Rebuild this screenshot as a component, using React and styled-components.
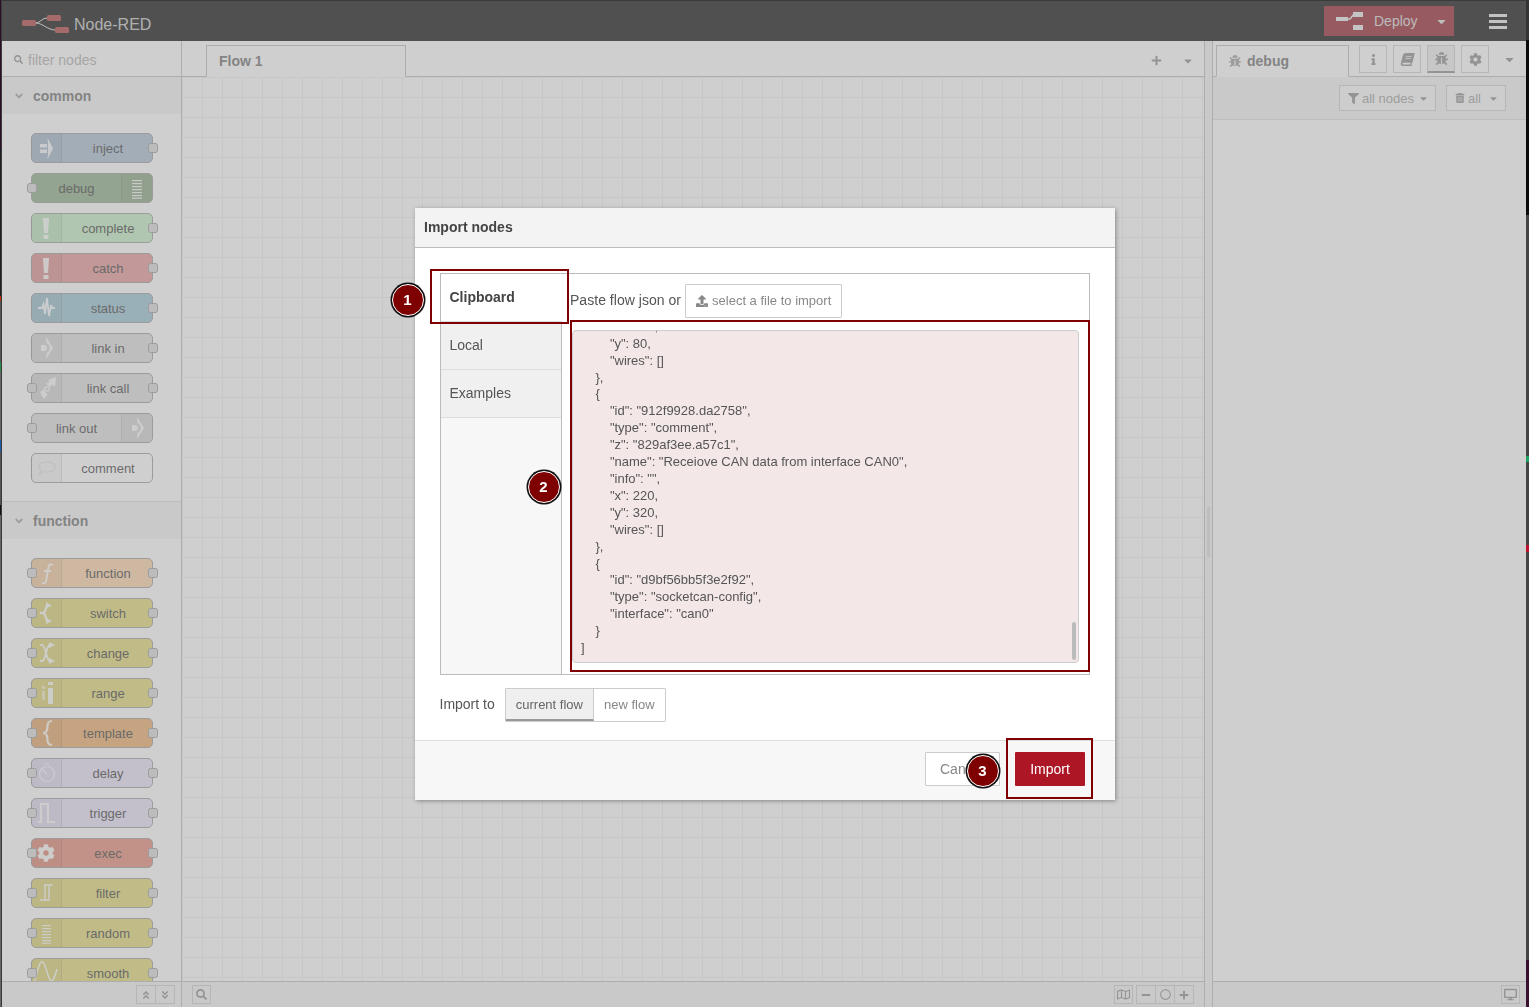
import React from 'react';
import styled, { createGlobalStyle } from 'styled-components';
import { FaBug, FaBook, FaInfo, FaCog, FaFilter, FaTrashAlt, FaSearch, FaPlus, FaMinus, FaRegCircle, FaRegMap, FaDesktop, FaAngleDoubleUp, FaAngleDoubleDown, FaCaretDown, FaUpload, FaAngleDown } from 'react-icons/fa';

const Global = createGlobalStyle`
  html, body { margin: 0; padding: 0; height: 100%; overflow: hidden; }
  body {
    font-family: "Liberation Sans", Arial, sans-serif;
    background-color: #3a3a3a;
    background-image:
      linear-gradient(to bottom, #2a1028 0, #2a1028 150px, #1c2222 150px, #1c2222 296px, #c02a10 296px, #c02a10 301px, #555 301px, #555 362px, #2a8a50 362px, #2a8a50 372px, #666 372px, #666 440px, #1c5ca8 440px, #1c5ca8 452px, #555 452px, #555 505px, #111 505px, #111 515px, #666 515px, #666 1007px),
      linear-gradient(to bottom, #333 0, #333 40px, #0a0a0a 40px, #0a0a0a 215px, #444 215px, #444 456px, #20a060 456px, #20a060 462px, #444 462px, #444 545px, #c01030 545px, #c01030 552px, #444 552px, #444 960px, #3a1030 960px, #3a1030 1007px);
    background-size: 1px 100%, 3px 100%;
    background-position: left top, right top;
    background-repeat: no-repeat;
  }
`;

const Frame = styled.div`
  position: relative;
  margin: 1px 3px 0 2px;
  height: 1006px;
  display: flex;
  flex-direction: column;
  overflow: hidden;
  background: #fff;
  color: #555;
  font-size: 14px;
`;
const Shade = styled.div`
  position: absolute;
  inset: 0;
  background: rgba(160, 160, 160, 0.5);
`;

const Header = styled.header`
  height: 40px;
  flex: none;
  background: #000;
  display: flex;
  align-items: center;
  padding: 0 19px 0 20px;
`;
const Brand = styled.div`
  display: flex;
  align-items: center;
  gap: 4px;
  color: #c0c0c0;
  font-size: 16px;
  flex: 1;
  padding-top: 6px;
  svg { margin-top: 2px; }
  span { margin-top: 1px; }
`;
const Deploy = styled.div`
  width: 130px;
  height: 30px;
  background: #8e1420;
  color: #d8d8d8;
  font-size: 14px;
  display: flex;
  align-items: center;
  padding-left: 12px;
  box-sizing: border-box;
  margin-right: 35px;
  svg:first-child { margin-right: 10px; }
  span { flex: 1; margin-top: -1px; }
  svg:last-child { margin-right: 6px; }
`;
const Burger = styled.div`
  width: 18px;
  display: flex;
  flex-direction: column;
  gap: 3px;
  i { display: block; height: 3px; background: #e4e4e4; }
`;

const Main = styled.div`
  flex: 1;
  display: flex;
  min-height: 0;
`;

const Palette = styled.aside`
  width: 179px;
  flex: none;
  display: flex;
  flex-direction: column;
  border-right: 1px solid #bbb;
  box-sizing: content-box;
  background: #fff;
`;
const Search = styled.div`
  height: 36px;
  flex: none;
  display: flex;
  align-items: center;
  gap: 5px;
  padding: 2px 0 0 12px;
  box-sizing: border-box;
  border-bottom: 1px solid #bbb;
  color: #aaa;
  svg { color: #888; }
`;
const PaletteScroll = styled.div`
  flex: 1;
  overflow: hidden;
  min-height: 0;
`;
const CatHeader = styled.div`
  height: ${p => (p.$first ? 37 : 38)}px;
  box-sizing: border-box;
  display: flex;
  align-items: center;
  gap: 8px;
  padding-left: 11px;
  background: #f3f3f3;
  ${p => !p.$first && 'border-top: 1px solid #ddd;'}
  color: #666;
  font-weight: bold;
  svg { color: #999; }
`;
const NodeList = styled.div`
  display: flex;
  flex-direction: column;
  gap: 10px;
  padding: 19px 0 18px 29px;
`;
const Node = styled.div`
  position: relative;
  width: 122px;
  height: 30px;
  box-sizing: border-box;
  flex: none;
  display: flex;
  flex-direction: ${p => (p.$right ? 'row-reverse' : 'row')};
  align-items: stretch;
  background: ${p => p.$color};
  border: 1px solid #999;
  border-radius: 5px;
  font-size: 13px;
  color: #333;
`;
const NodeIcon = styled.div`
  width: 30px;
  flex: none;
  margin: ${p => (p.$right ? '0' : '0 0 0 -1px')};
  background: rgba(0, 0, 0, 0.05);
  ${p => (p.$right ? 'border-left' : 'border-right')}: 1px solid rgba(0, 0, 0, 0.1);
  border-radius: ${p => (p.$right ? '0 4px 4px 0' : '4px 0 0 4px')};
  display: flex;
  align-items: center;
  justify-content: center;
  svg { display: block; }
`;
const NodeLabel = styled.div`
  flex: 1;
  text-align: center;
  line-height: 30px;
  padding-left: ${p => (p.$right ? 0 : 2)}px;
`;
const Port = styled.span`
  position: absolute;
  top: 9px;
  ${p => p.$side}: ${p => (p.$side === 'left' ? -5 : -6)}px;
  width: 10px;
  height: 10px;
  box-sizing: border-box;
  background: #d9d9d9;
  border: 1px solid #999;
  border-radius: 2.5px;
`;

const Footer = styled.div`
  height: 26px;
  flex: none;
  box-sizing: border-box;
  border-top: 1px solid #bbb;
  background: #f3f3f3;
  display: flex;
  align-items: center;
  padding: 0 ${p => p.$right || 0}px 0 ${p => p.$left || 0}px;
  justify-content: ${p => p.$justify || 'flex-start'};
`;
const FootBtn = styled.div`
  width: ${p => p.$w || 20}px;
  height: 19px;
  box-sizing: border-box;
  border: 1px solid #ccc;
  margin-left: ${p => p.$ml || 0}px;
  background: #f3f3f3;
  color: #888;
  display: flex;
  align-items: center;
  justify-content: center;
  font-size: 12px;
`;
const Spacer = styled.div`
  flex: 1;
`;

const Workspace = styled.main`
  flex: 1;
  min-width: 0;
  display: flex;
  flex-direction: column;
  border-right: 1px solid #bbb;
`;
const TabBar = styled.div`
  height: 36px;
  box-sizing: border-box;
  flex: none;
  border-bottom: 1px solid #bbb;
  display: flex;
  align-items: flex-end;
  background: #fff;
  padding-left: ${p => p.$left}px;
  color: #888;
`;
const Tab = styled.div`
  width: ${p => p.$w}px;
  height: 32px;
  box-sizing: border-box;
  margin-bottom: -1px;
  border: 1px solid #bbb;
  border-bottom: 1px solid #fff;
  background: #fff;
  display: flex;
  align-items: center;
  gap: 6px;
  padding-left: 12px;
  font-weight: bold;
  color: #666;
`;
const TabTools = styled.div`
  margin-left: auto;
  height: 100%;
  box-sizing: border-box;
  display: flex;
  align-items: center;
  gap: 20px;
  padding: 4px 10px 0 0;
`;
const Canvas = styled.div`
  flex: 1;
  min-height: 0;
  background-color: #fff;
  background-image:
    linear-gradient(to right, transparent 19px, #eee 19px),
    linear-gradient(to bottom, transparent 19px, #eee 19px);
  background-size: 20px 20px;
  background-position: 1px 1px;
`;

const Separator = styled.div`
  width: 7px;
  flex: none;
  background: #f3f3f3;
  display: flex;
  align-items: center;
  justify-content: center;
  i { display: block; width: 3px; height: 50px; background: #ddd; margin-top: 16px; }
`;
const Sidebar = styled.aside`
  width: 314px;
  flex: none;
  border-left: 1px solid #bbb;
  box-sizing: border-box;
  display: flex;
  flex-direction: column;
  background: #fff;
`;
const SideIconRow = styled.div`
  margin-left: 10px;
  align-self: flex-start;
  margin-top: 4px;
  display: flex;
  align-items: center;
  gap: 6px;
`;
const SideBtn = styled.div`
  width: 28px;
  height: 28px;
  box-sizing: border-box;
  border: 1px solid #ccc;
  ${p => p.$active && 'border-bottom: 2px solid #888; background: #efefef;'}
  color: #888;
  font-size: 13px;
  display: flex;
  align-items: center;
  justify-content: center;
`;
const SkewBook = styled(FaBook)`
  transform: skewX(-14deg);
`;
const SideCaret = styled.div`
  margin-left: 8px;
  color: #888;
  font-size: 13px;
  display: flex;
`;
const SideToolbar = styled.div`
  height: 43px;
  flex: none;
  box-sizing: border-box;
  background: #f3f3f3;
  border-bottom: 1px solid #ddd;
  display: flex;
  align-items: center;
  justify-content: flex-end;
  gap: 10px;
  padding: 0 20px 0 0;
`;
const ToolBtn = styled.div`
  height: 26px;
  width: ${p => p.$w}px;
  box-sizing: border-box;
  border: 1px solid #ccc;
  background: #fafafa;
  color: #999;
  font-size: 13px;
  display: flex;
  align-items: center;
  gap: 3px;
  padding-left: 8px;
  span { flex: 1; }
  svg:last-child { margin-right: 6px; color: #888; }
`;
const SideBody = styled.div`
  flex: 1;
`;

const Dialog = styled.section`
  position: fixed;
  left: 415px;
  top: 208px;
  width: 700px;
  height: 592px;
  display: flex;
  flex-direction: column;
  background: #fff;
  box-shadow: 1px 1px 4px rgba(0, 0, 0, 0.35);
  color: #555;
  font-size: 14px;
`;
const DialogTitle = styled.div`
  height: 40px;
  flex: none;
  box-sizing: border-box;
  background: #f3f3f3;
  border-bottom: 1px solid #bbb;
  font-weight: bold;
  color: #444;
  display: flex;
  align-items: center;
  padding: 0 0 1px 9px;
`;
const DialogBody = styled.div`
  flex: 1;
  padding: 25px 25px 0;
  display: flex;
  flex-direction: column;
  gap: 13px;
`;
const ImportBox = styled.div`
  height: 402px;
  flex: none;
  box-sizing: border-box;
  border: 1px solid #bbb;
  display: flex;
`;
const ModeList = styled.div`
  width: 120px;
  flex: none;
  display: flex;
  flex-direction: column;
  background: #f7f7f7;
  border-right: 1px solid #bbb;
`;
const ModeTab = styled.div`
  height: 48px;
  box-sizing: border-box;
  flex: none;
  display: flex;
  align-items: center;
  padding: 0 0 ${p => (p.$active ? 1 : 2)}px 8.5px;
  border-bottom: 1px solid #ddd;
  background: ${p => (p.$active ? '#fff' : '#f0f0f0')};
  ${p => p.$active && 'font-weight: bold; color: #444; margin-right: -1px;'}
`;
const Pane = styled.div`
  flex: 1;
  min-width: 0;
  padding: 10px;
  display: flex;
  flex-direction: column;
  gap: 12px;
`;
const PasteRow = styled.div`
  display: flex;
  align-items: center;
  gap: 4px;
  margin-left: -2px;
  span { margin-top: -2px; letter-spacing: 0.03px; }
`;
const FileButton = styled.div`
  width: 157px;
  height: 34px;
  box-sizing: border-box;
  border: 1px solid #ccc;
  border-radius: 1px;
  display: flex;
  align-items: center;
  gap: 4px;
  padding: 0 0 1px 10px;
  color: #888;
  font-size: 13px;
  svg { color: #888; }
`;
const JsonArea = styled.div`
  position: relative;
  width: 507px;
  height: 333px;
  flex: none;
  box-sizing: border-box;
  border: 1px solid #ccc;
  border-radius: 4px;
  background: #f3e7e7;
  overflow: hidden;
`;
const JsonText = styled.pre`
  margin: -12.2px 0 0;
  padding: 0 0 0 8px;
  font-family: "Liberation Sans", Arial, sans-serif;
  font-size: 13px;
  line-height: 16.9px;
  color: #555;
`;
const ScrollThumb = styled.i`
  position: absolute;
  right: 2px;
  bottom: 2px;
  width: 4px;
  height: 38px;
  border-radius: 2px;
  background: #bbb;
`;
const ImportTo = styled.div`
  display: flex;
  align-items: center;
  gap: 10px;
  margin-left: -0.5px;
  span { margin-top: -2px; }
`;
const Toggle = styled.div`
  display: flex;
  height: 34px;
  box-sizing: border-box;
  border: 1px solid #ccc;
  border-radius: 1px;
  font-size: 13px;
`;
const ToggleItem = styled.div`
  padding: 0 10px 1px;
  display: flex;
  align-items: center;
  color: ${p => (p.$on ? '#666' : '#888')};
  background: ${p => (p.$on ? '#efefef' : '#fff')};
  ${p => p.$on && 'border-right: 1px solid #ccc; border-bottom: 2px solid #999; padding-bottom: 0;'}
`;
const DialogFooter = styled.div`
  height: 60px;
  flex: none;
  box-sizing: border-box;
  background: #f7f7f7;
  border-top: 1px solid #ddd;
  display: flex;
  align-items: center;
  justify-content: flex-end;
  gap: 15px;
  padding: 0 30px 3px 0;
`;
const CancelBtn = styled.div`
  width: 75px;
  height: 34px;
  box-sizing: border-box;
  background: #fff;
  border: 1px solid #ccc;
  border-radius: 1px;
  color: #888;
  display: flex;
  align-items: center;
  padding-left: 14px;
`;
const ImportBtn = styled.div`
  width: 70px;
  height: 34px;
  background: #ad1625;
  color: #fff;
  border-radius: 1px;
  display: flex;
  align-items: center;
  justify-content: center;
`;
const Highlight = styled.div`
  position: absolute;
  left: ${p => p.$x}px;
  top: ${p => p.$y}px;
  width: ${p => p.$w}px;
  height: ${p => p.$h}px;
  box-sizing: border-box;
  border: 2px solid #7f0000;
  pointer-events: none;
`;
const Badge = styled.div`
  position: absolute;
  left: ${p => p.$x - 16}px;
  top: ${p => p.$y - 16}px;
  width: 32px;
  height: 32px;
  box-sizing: border-box;
  border-radius: 50%;
  background: #7f0000;
  border: 1.5px solid #fff;
  box-shadow: 0 0 0 1.5px #111;
  color: #fff;
  font-weight: bold;
  font-size: 15px;
  display: flex;
  align-items: center;
  justify-content: center;
  padding: 0 1px 1px 0;
`;

const W = { fill: 'rgba(255,255,255,.9)' };
const S = { fill: 'none', stroke: 'rgba(255,255,255,.9)', strokeWidth: 2 };
const Ico = ({ children }) => <svg width="30" height="28" viewBox="0 0 30 28">{children}</svg>;

const icons = {
  inject: <Ico><g {...W}><rect x="9" y="10" width="7" height="3.5" /><rect x="9" y="15.5" width="7" height="3.5" /><path d="M16.5 4 L22 14.5 L16.5 25 L17 20 V9 Z" /></g></Ico>,
  debug: <Ico><g {...W}>{[6, 9, 12, 15, 18, 21, 23.6].map(y => <rect key={y} x="10" y={y} width="10" height="1.2" />)}</g></Ico>,
  alert: <Ico><g {...W}><path d="M12 4 H18 L17 19 H13 Z" /><rect x="12.5" y="21" width="5" height="4" /></g></Ico>,
  status: <Ico><path {...S} strokeWidth="1.8" d="M7 14 H11 L12.5 10 L14 20 L16 4 L18 22 L20 11 L21 14 H24" /></Ico>,
  linkIn: <Ico><g {...W}><path d="M15 3 L22 14 L15 25 L15.5 19 A5.5 5.5 0 0 0 15.5 9 Z" /><path d="M10 11 H13 A3 3 0 0 1 13 17 H10 Z" /></g></Ico>,
  linkCall: <Ico><g {...W}><path d="M17 6 L25 3 L24 13 L21.5 10.5 L18.5 13 L15 9.5 L19 8 Z" /><path d="M9 18 L13 15 A4.5 4.5 0 0 0 17 20 L13 25 Z" /></g><circle cx="16" cy="15" r="2.2" fill="none" stroke="rgba(255,255,255,.9)" strokeWidth="1.2" /></Ico>,
  comment: <Ico><path fill="none" stroke="#ddd" strokeWidth="1.2" d="M8 13 C8 10 11 8 16 8 C21 8 24 10 24 13 C24 16 21 18 16 18 C14 18 13 18 12 18 L8 21 L10 17 C9 16 8 15 8 13 Z" /></Ico>,
  func: <Ico><path {...S} strokeWidth="1.9" d="M22 6 C18 4 17.5 7 17 11 L15.5 20 C15 24 14 25 11 24 M13 12 H20" /></Ico>,
  sw: <Ico><path {...S} strokeWidth="2.3" d="M9 14 H12 C15 14 14 8 17 6 M12 14 C15 14 14 20 17 22" /><g {...W}><path d="M15 3 L21 7 L15 9 Z" /><path d="M15 19 L21 22 L15 25 Z" /></g></Ico>,
  change: <Ico><path {...S} strokeWidth="2" d="M9 6 H11 C15 6 15 22 19 22 M9 22 H11 C15 22 15 6 19 6" /><g {...W}><path d="M18 3 L24 6 L18 9 Z" /><path d="M18 19 L24 22 L18 25 Z" /></g></Ico>,
  range: <Ico><g {...W}><rect x="11" y="7" width="3" height="3" opacity=".6" /><rect x="11" y="12" width="3" height="9" opacity=".6" /><rect x="17" y="3" width="5" height="3" /><rect x="17" y="9" width="5" height="16" /></g></Ico>,
  template: <Ico><path {...S} strokeWidth="2.2" d="M21 2 C15 2 17 8 16 11 C15.5 13 13 14 12 14 C13 14 15.5 15 16 17 C17 20 15 26 21 26" /></Ico>,
  delay: <Ico><g fill="none" stroke="rgba(255,255,255,.8)" strokeWidth="1.2"><circle cx="16" cy="15" r="7.5" /><path d="M13 5 L18 5 M16 15 L11 10" /></g></Ico>,
  trigger: <Ico><path {...S} d="M7 23 H10 V5 H17 V23 H24" /></Ico>,
  exec: <FaCog size={18} color="rgba(255,255,255,.95)" />,
  filter: <Ico><path {...S} strokeWidth="1.4" d="M9 21 H14 V6 H22 M18 6 V21 H14" /></Ico>,
  random: <Ico><g {...W}>{[6, 9, 12, 15, 18, 21, 23.6].map(y => <rect key={y} x="11" y={y} width="9" height="1.2" />)}</g></Ico>,
  smooth: <Ico><path {...S} strokeWidth="1.5" d="M2 26 C6 18 7 6 10 3 C14 0 16 18 20 22 C22 23 25 14 26 10" /></Ico>,
};

const common = [
  ['inject', '#a6bbcf', 'inject', 'o'],
  ['debug', '#87a980', 'debug', 'i', true],
  ['complete', '#c0edc0', 'alert', 'o'],
  ['catch', '#e49191', 'alert', 'o'],
  ['status', '#94c1d0', 'status', 'o'],
  ['link in', '#dddddd', 'linkIn', 'o'],
  ['link call', '#dddddd', 'linkCall', 'io'],
  ['link out', '#dddddd', 'linkIn', 'i', true],
  ['comment', '#ffffff', 'comment', ''],
];
const functions = [
  ['function', '#fdd0a2', 'func', 'io'],
  ['switch', '#e2d96e', 'sw', 'io'],
  ['change', '#e2d96e', 'change', 'io'],
  ['range', '#e2d96e', 'range', 'io'],
  ['template', '#eda862', 'template', 'io'],
  ['delay', '#e6e0f8', 'delay', 'io'],
  ['trigger', '#e6e0f8', 'trigger', 'io'],
  ['exec', '#e4836e', 'exec', 'io'],
  ['filter', '#e2d96e', 'filter', 'io'],
  ['random', '#e2d96e', 'random', 'io'],
  ['smooth', '#e2d96e', 'smooth', 'io'],
];

const PaletteNode = ({ item: [label, color, icon, ports, right] }) => (
  <Node $color={color} $right={right}>
    {ports.includes('i') && <Port $side="left" />}
    <NodeIcon $right={right}>{icons[icon]}</NodeIcon>
    <NodeLabel $right={right}>{label}</NodeLabel>
    {ports.includes('o') && <Port $side="right" />}
  </Node>
);

const json = `        "x": 240,
        "y": 80,
        "wires": []
    },
    {
        "id": "912f9928.da2758",
        "type": "comment",
        "z": "829af3ee.a57c1",
        "name": "Receiove CAN data from interface CAN0",
        "info": "",
        "x": 220,
        "y": 320,
        "wires": []
    },
    {
        "id": "d9bf56bb5f3e2f92",
        "type": "socketcan-config",
        "interface": "can0"
    }
]`;

const Logo = () => (
  <svg width="48" height="20" viewBox="0 0 48 20">
    <path d="M14 8 C18 8 20 3 25 3 M14 8 C20 8 26 15 33 15" fill="none" stroke="#e0e0e0" strokeWidth="1" />
    <rect x="0" y="5" width="14" height="6" rx="1.5" fill="#aa3434" />
    <rect x="25" y="0" width="14" height="6" rx="1.5" fill="#aa3434" />
    <rect x="33" y="12" width="14" height="6" rx="1.5" fill="#aa3434" />
  </svg>
);

const DeployIcon = () => (
  <svg width="28" height="20" viewBox="0 0 28 20">
    <g fill="#e8e8e8">
      <rect x="0" y="6" width="12" height="4" />
      <rect x="17" y="1" width="10" height="5" />
      <rect x="17" y="14" width="10" height="5" />
    </g>
    <path d="M11 8 L14 8 L18 3" fill="none" stroke="#e8e8e8" strokeWidth="1.5" />
  </svg>
);

export default function App() {
  return (
    <>
      <Global />
      <Frame>
        <Header>
          <Brand><Logo /><span>Node-RED</span></Brand>
          <Deploy><DeployIcon /><span>Deploy</span><FaCaretDown size={13} /></Deploy>
          <Burger><i /><i /><i /></Burger>
        </Header>
        <Main>
          <Palette>
            <Search><FaSearch size={9} /><span>filter nodes</span></Search>
            <PaletteScroll>
              <CatHeader $first><FaAngleDown size={12} />common</CatHeader>
              <NodeList>{common.map(n => <PaletteNode key={n[0]} item={n} />)}</NodeList>
              <CatHeader><FaAngleDown size={12} />function</CatHeader>
              <NodeList>{functions.map(n => <PaletteNode key={n[0]} item={n} />)}</NodeList>
            </PaletteScroll>
            <Footer $justify="flex-end" $right={6}>
              <FootBtn><FaAngleDoubleUp size={10} /></FootBtn>
              <FootBtn $ml={-1}><FaAngleDoubleDown size={10} /></FootBtn>
            </Footer>
          </Palette>
          <Workspace>
            <TabBar $left={24}>
              <Tab $w={200}>Flow 1</Tab>
              <TabTools><FaPlus size={11} /><FaCaretDown size={12} /></TabTools>
            </TabBar>
            <Canvas />
            <Footer $left={10} $right={10}>
              <FootBtn $w={19}><FaSearch size={11} /></FootBtn>
              <Spacer />
              <FootBtn $w={19}><FaRegMap size={13} /></FootBtn>
              <FootBtn $ml={3}><FaMinus size={10} /></FootBtn>
              <FootBtn $ml={-1}><FaRegCircle size={11} /></FootBtn>
              <FootBtn $ml={-1}><FaPlus size={10} /></FootBtn>
            </Footer>
          </Workspace>
          <Separator><i /></Separator>
          <Sidebar>
            <TabBar $left={3}>
              <Tab $w={133}><FaBug size={12} color="#999" />debug</Tab>
              <SideIconRow>
                <SideBtn><FaInfo size={11} /></SideBtn>
                <SideBtn><SkewBook size={13} /></SideBtn>
                <SideBtn $active><FaBug size={13} /></SideBtn>
                <SideBtn><FaCog size={13} /></SideBtn>
                <SideCaret><FaCaretDown size={13} /></SideCaret>
              </SideIconRow>
            </TabBar>
            <SideToolbar>
              <ToolBtn $w={97}><FaFilter size={11} color="#888" /><span>all nodes</span><FaCaretDown size={11} /></ToolBtn>
              <ToolBtn $w={60}><FaTrashAlt size={10} color="#888" /><span>all</span><FaCaretDown size={11} /></ToolBtn>
            </SideToolbar>
            <SideBody />
            <Footer $justify="flex-end" $right={6}>
              <FootBtn $w={19}><FaDesktop size={13} /></FootBtn>
            </Footer>
          </Sidebar>
        </Main>
        <Shade />
      </Frame>
      <Dialog>
        <DialogTitle>Import nodes</DialogTitle>
        <DialogBody>
          <ImportBox>
            <ModeList>
              <ModeTab $active>Clipboard</ModeTab>
              <ModeTab>Local</ModeTab>
              <ModeTab>Examples</ModeTab>
            </ModeList>
            <Pane>
              <PasteRow>
                <span>Paste flow json or</span>
                <FileButton><FaUpload size={12} />select a file to import</FileButton>
              </PasteRow>
              <JsonArea>
                <JsonText>{json}</JsonText>
                <ScrollThumb />
              </JsonArea>
            </Pane>
          </ImportBox>
          <ImportTo>
            <span>Import to</span>
            <Toggle>
              <ToggleItem $on>current flow</ToggleItem>
              <ToggleItem>new flow</ToggleItem>
            </Toggle>
          </ImportTo>
        </DialogBody>
        <DialogFooter>
          <CancelBtn>Cancel</CancelBtn>
          <ImportBtn>Import</ImportBtn>
        </DialogFooter>
        <Highlight $x={15} $y={61} $w={139} $h={55} />
        <Highlight $x={155} $y={112} $w={520} $h={352} />
        <Highlight $x={591} $y={530} $w={87} $h={61} />
        <Badge $x={-7} $y={92}>1</Badge>
        <Badge $x={129} $y={279}>2</Badge>
        <Badge $x={568} $y={563}>3</Badge>
      </Dialog>
    </>
  );
}
